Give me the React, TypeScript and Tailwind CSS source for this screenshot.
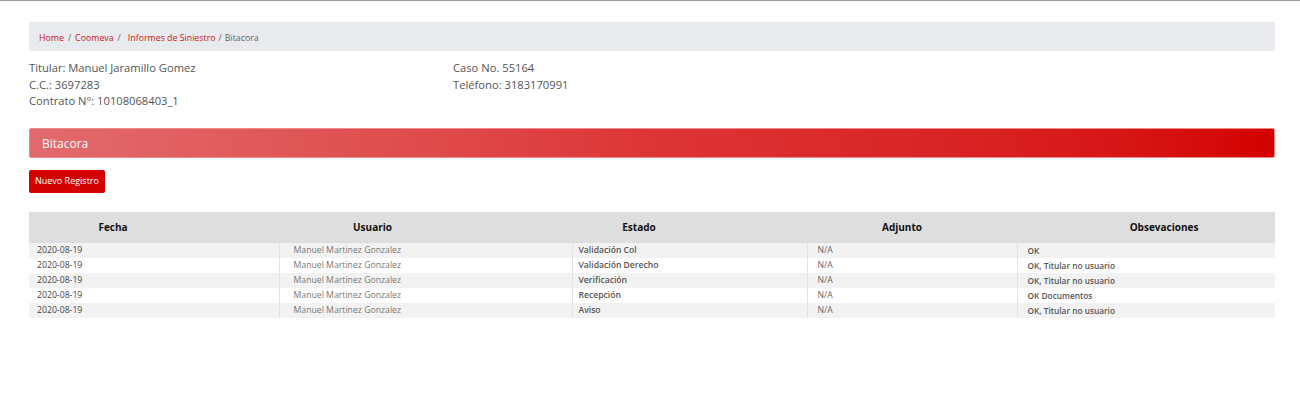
export default function App() {
  const rows = [
    { fecha: '2020-08-19', usuario: 'Manuel Martinez Gonzalez', estado: 'Validación Col', adjunto: 'N/A', obs: 'OK' },
    { fecha: '2020-08-19', usuario: 'Manuel Martinez Gonzalez', estado: 'Validación Derecho', adjunto: 'N/A', obs: 'OK, Titular no usuario' },
    { fecha: '2020-08-19', usuario: 'Manuel Martinez Gonzalez', estado: 'Verificación', adjunto: 'N/A', obs: 'OK, Titular no usuario' },
    { fecha: '2020-08-19', usuario: 'Manuel Martinez Gonzalez', estado: 'Recepción', adjunto: 'N/A', obs: 'OK Documentos' },
    { fecha: '2020-08-19', usuario: 'Manuel Martinez Gonzalez', estado: 'Aviso', adjunto: 'N/A', obs: 'OK, Titular no usuario' },
  ];

  return (
    <div className="min-h-screen bg-white border-t border-[#9a9a9a] font-['Open_Sans',sans-serif]">
      <div className="pl-[29px] pr-[25px] pt-[21px]">
        <div className="h-[29px] bg-[#e9eaed] flex items-center pt-[5px] px-[10px] text-[8.8px] text-[#666]">
          <a className="text-[#c4161c]">Home</a>
          <span className="mx-[4px]">/</span>
          <a className="text-[#c4161c]">Coomeva</a>
          <span className="ml-[4px] mr-[7px]">/</span>
          <a className="text-[#c4161c]">Informes de Siniestro</a>
          <span className="mx-[3px]">/</span>
          <span>Bitacora</span>
        </div>

        <div className="flex mt-[9px] text-[11.2px] leading-[16.5px] text-[#555]">
          <div className="w-[424px]">
            <div>Titular: Manuel Jaramillo Gomez</div>
            <div>C.C.: 3697283</div>
            <div>Contrato N°: 10108068403_1</div>
          </div>
          <div>
            <div>Caso No. 55164</div>
            <div>Teléfono: 3183170991</div>
          </div>
        </div>

        <div className="mt-[18px] h-[30px] rounded-[2px] border border-[#f08a8a] bg-gradient-to-r from-[#e26a6d] via-[#dd3436] to-[#d40000] flex items-center pt-[2px] px-[12px] text-[12px] text-white">
          Bitacora
        </div>

        <button className="mt-[12px] h-[23px] px-[6px] rounded-[2px] bg-[#d40000] text-white text-[9px]">
          Nuevo Registro
        </button>

        <table className="mt-[19px] w-full border-collapse text-[8.7px]">
          <thead>
            <tr className="bg-[#dedede] h-[31px] text-[10px] text-[#111]">
              <th className="w-[250px] font-bold pr-[82px]">Fecha</th>
              <th className="w-[293px] font-bold pr-[106px]">Usuario</th>
              <th className="w-[235px] font-bold pr-[101px]">Estado</th>
              <th className="w-[210px] font-bold pr-[20px]">Adjunto</th>
              <th className="font-bold pl-[36px]">Obsevaciones</th>
            </tr>
          </thead>
          <tbody>
            {rows.map((r, i) => (
              <tr key={i} className={`h-[15px] leading-[15px] ${i % 2 === 0 ? 'bg-[#f2f2f2]' : 'bg-white'}`}>
                <td className="pl-[8px] py-0 text-[#444]">{r.fecha}</td>
                <td className="pl-[14px] py-0 text-[#777] border-l border-[#e2e2e2]">{r.usuario}</td>
                <td className="pl-[6px] py-0 text-[#555] text-[8.6px] font-semibold border-l border-[#e2e2e2]">{r.estado}</td>
                <td className="pl-[10px] py-0 text-[#666] border-l border-[#e2e2e2]">{r.adjunto}</td>
                <td className="pl-[10px] py-0 text-[#555] text-[8.3px] font-semibold border-l border-[#e2e2e2]">{r.obs}</td>
              </tr>
            ))}
          </tbody>
        </table>
      </div>
    </div>
  );
}
